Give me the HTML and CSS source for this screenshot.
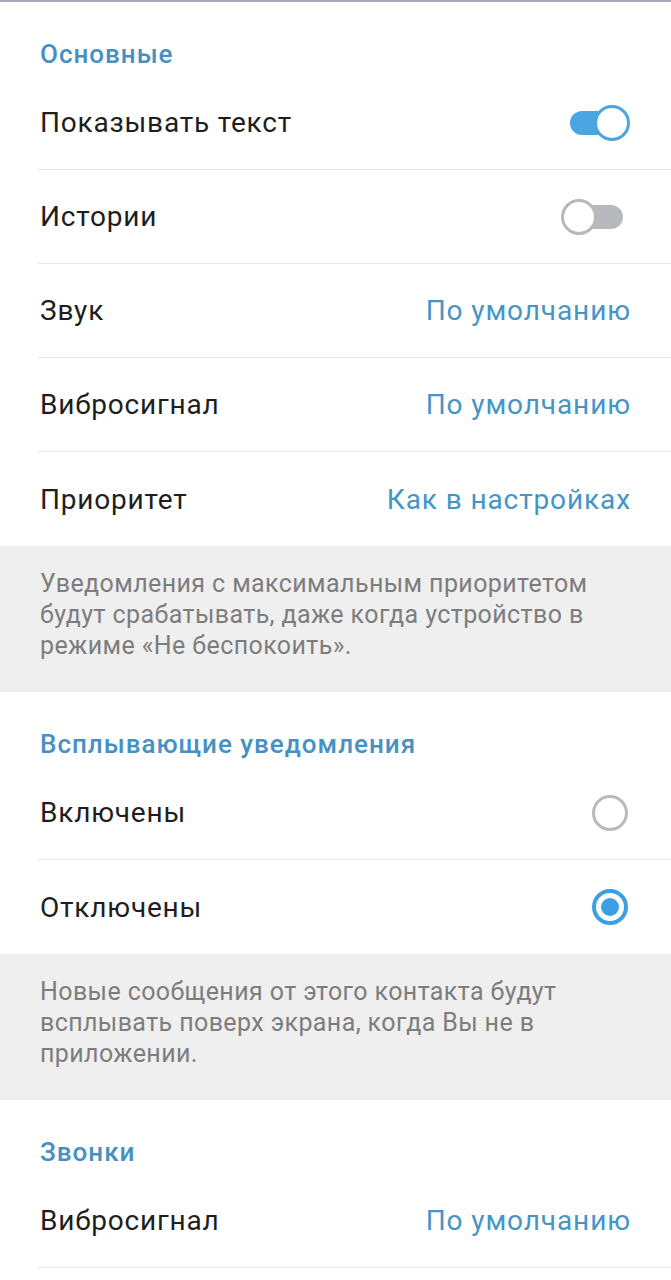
FILE: index.html
```html
<!DOCTYPE html>
<html lang="ru">
<head>
    <meta charset="UTF-8">
    <meta name="viewport" content="width=device-width, initial-scale=1.0">
    <title>Уведомления</title>
    <link rel="stylesheet" href="styles.css">
</head>
<body>
    <div id="ecran">
        <div class="section">
            <div class="titre">Основные</div>
            <div class="ligne">
                <span class="libelle">Показывать текст</span>
                <span class="switch on"><span class="pouce"></span></span>
            </div>
            <div class="ligne">
                <span class="libelle">Истории</span>
                <span class="switch off"><span class="pouce"></span></span>
            </div>
            <div class="ligne">
                <span class="libelle">Звук</span>
                <span class="valeur">По умолчанию</span>
            </div>
            <div class="ligne">
                <span class="libelle">Вибросигнал</span>
                <span class="valeur">По умолчанию</span>
            </div>
            <div class="ligne derniere">
                <span class="libelle">Приоритет</span>
                <span class="valeur">Как в настройках</span>
            </div>
        </div>
        <div class="info">
            Уведомления с максимальным приоритетом будут срабатывать, даже когда устройство в режиме «Не беспокоить».
        </div>

        <div class="section">
            <div class="titre">Всплывающие уведомления</div>
            <div class="ligne">
                <span class="libelle">Включены</span>
                <span class="radio"></span>
            </div>
            <div class="ligne derniere">
                <span class="libelle">Отключены</span>
                <span class="radio coche"></span>
            </div>
        </div>
        <div class="info">
            Новые сообщения от этого контакта будут всплывать поверх экрана, когда Вы не в приложении.
        </div>

        <div class="section">
            <div class="titre">Звонки</div>
            <div class="ligne">
                <span class="libelle">Вибросигнал</span>
                <span class="valeur">По умолчанию</span>
            </div>
        </div>
    </div>
</body>
</html>
```

FILE: styles.css
```css
body{
    margin: 0;
    background: #fff;
    font-family: Roboto, "Noto Sans", sans-serif;
}

#ecran{
    border-top: 2px solid #a9a6ba;
}

.titre{
    height: 74px;
    box-sizing: border-box;
    padding: 36px 40px 0;
    line-height: 32px;
    font-size: 26px;
    font-weight: 500;
    letter-spacing: 1px;
    color: #4690c3;
}

.ligne{
    height: 94px;
    box-sizing: border-box;
    margin-left: 38px;
    padding: 0 40px 0 2px;
    display: flex;
    align-items: center;
    justify-content: space-between;
    border-bottom: 1px solid #e7e7e7;
}

.ligne.derniere{
    border-bottom: none;
}

.libelle{
    font-size: 28px;
    letter-spacing: 0.8px;
    color: #1e1e1e;
}

.valeur{
    font-size: 28px;
    letter-spacing: 0.9px;
    color: #4495c7;
}

.switch{
    position: relative;
    width: 62px;
    height: 36px;
}

.switch::before{
    content: "";
    position: absolute;
    top: 6px;
    left: 2px;
    right: 2px;
    height: 24px;
    border-radius: 12px;
}

.switch .pouce{
    position: absolute;
    top: 0;
    width: 36px;
    height: 36px;
    box-sizing: border-box;
    border-radius: 50%;
    background: #fff;
    border: 3px solid;
}

.switch.on{
    margin-right: 1px;
}

.switch.on::before{
    background: #4ca5e3;
}

.switch.on .pouce{
    right: 0;
    border-color: #4ca5e3;
}

.switch.off{
    margin-right: 6px;
}

.switch.off::before{
    background: #b8b9bc;
}

.switch.off .pouce{
    left: -2px;
    border-color: #b8b8b8;
}

.radio{
    position: relative;
    width: 36px;
    height: 36px;
    box-sizing: border-box;
    margin-right: 3px;
    border-radius: 50%;
    border: 3px solid #bababa;
}

.radio.coche{
    border: 4px solid #3c9fe5;
}

.radio.coche::after{
    content: "";
    position: absolute;
    top: 5px;
    left: 5px;
    width: 18px;
    height: 18px;
    border-radius: 50%;
    background: #3c9fe5;
}

.info{
    background: #efefef;
    padding: 22px 40px 31px;
    font-size: 25px;
    letter-spacing: 0.4px;
    line-height: 31px;
    color: #7d7d7d;
}
```
